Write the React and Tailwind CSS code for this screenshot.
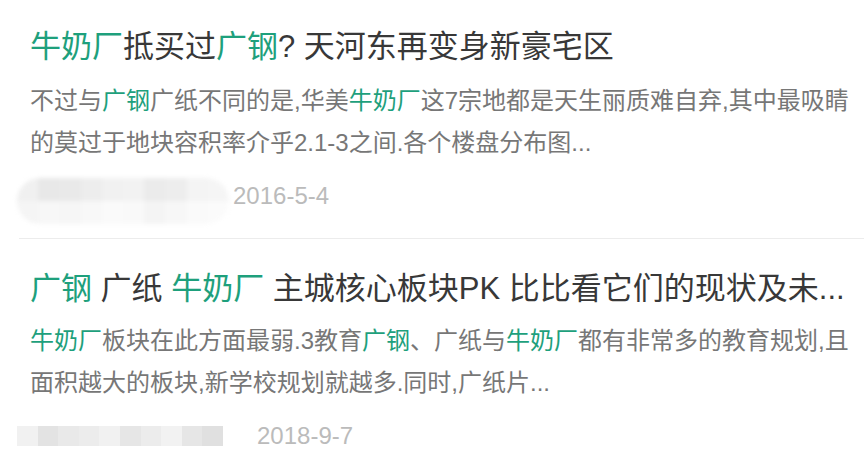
import React from 'react';

// 搜索结果列表（高亮关键词）
const G = ({ children }) => <span className="text-[#1ea07c]">{children}</span>;

const ITEMS = [
  {
    title: (
      <>
        <G>牛奶厂</G>抵买过<G>广钢</G>? 天河东再变身新豪宅区
      </>
    ),
    lines: [
      <>
        不过与<G>广钢</G>广纸不同的是,华美<G>牛奶厂</G>这7宗地都是天生丽质难自弃,其中最吸睛
      </>,
      <>的莫过于地块容积率介乎2.1-3之间.各个楼盘分布图...</>,
    ],
    date: '2016-5-4',
  },
  {
    title: (
      <>
        <G>广钢</G> 广纸 <G>牛奶厂</G> 主城核心板块PK 比比看它们的现状及未...
      </>
    ),
    lines: [
      <>
        <G>牛奶厂</G>板块在此方面最弱.3教育<G>广钢</G>、广纸与<G>牛奶厂</G>都有非常多的教育规划,且
      </>,
      <>面积越大的板块,新学校规划就越多.同时,广纸片...</>,
    ],
    date: '2018-9-7',
  },
];

const TOP = ['#f0f0f0', '#e8e8e8', '#e9e9e9', '#ededed', '#f1f1f1', '#f2f2f2', '#ebebeb', '#ededed', '#f4f4f4', '#f5f5f5'];
const BOTTOM = ['#f5f5f5', '#f7f7f7', '#f6f6f6', '#f8f8f8', '#fafafa', '#f9f9f9', '#f4f4f4', '#f7f7f7', '#fafafa', '#fbfbfb'];
const BAR = ['#f1f1f1', '#e3e3e3', '#e9e9e9', '#ececec', '#f1f1f1', '#e6e6e6', '#ececec', '#f2f2f2', '#e6e6e6', '#e0e0e0'];

const Mosaic = ({ type }) => {
  if (type === 'pill') {
    return (
      <div className="w-[212px] h-[46px] rounded-[23px] overflow-hidden blur-[2px] grid grid-cols-10 grid-rows-2">
        {TOP.map((c, i) => (
          <div key={'t' + i} style={{ background: c }} />
        ))}
        {BOTTOM.map((c, i) => (
          <div key={'b' + i} style={{ background: c }} />
        ))}
      </div>
    );
  }
  return (
    <div className="w-[206px] h-[20px] grid grid-cols-10">
      {BAR.map((c, i) => (
        <div key={i} style={{ background: c }} />
      ))}
    </div>
  );
};

export default function App() {
  return (
    <div
      className="w-[864px] h-[460px] bg-white overflow-hidden"
      style={{ fontFamily: '"Liberation Sans", "Noto Sans CJK SC", sans-serif' }}
    >
      {/* 第一条 */}
      <div className="ml-[19px] border-b border-[#ececec] pl-[11px] pt-[27px] pb-[14px]">
        <div className="text-[31px] leading-[40px] text-[#383838] whitespace-nowrap">{ITEMS[0].title}</div>
        <div className="mt-[13px] text-[24px] leading-[42px] text-[#777] whitespace-nowrap">
          {ITEMS[0].lines.map((l, i) => (
            <div key={i}>{l}</div>
          ))}
        </div>
        <div className="mt-[14px] -ml-[13px] flex items-start">
          <Mosaic type="pill" />
          <span className="ml-[4px] text-[24px] leading-[36px] text-[#bbb]">{ITEMS[0].date}</span>
        </div>
      </div>

      {/* 第二条 */}
      <div className="ml-[19px] pl-[11px] pt-[30px]">
        <div className="text-[31px] leading-[40px] text-[#383838] whitespace-nowrap">{ITEMS[1].title}</div>
        <div className="mt-[11px] text-[24px] leading-[42px] text-[#777] whitespace-nowrap">
          {ITEMS[1].lines.map((l, i) => (
            <div key={i}>{l}</div>
          ))}
        </div>
        <div className="mt-[14px] -ml-[13px] flex items-center h-[36px]">
          <Mosaic type="bar" />
          <span className="ml-[34px] text-[24px] leading-[36px] text-[#bbb]">{ITEMS[1].date}</span>
        </div>
      </div>
    </div>
  );
}
